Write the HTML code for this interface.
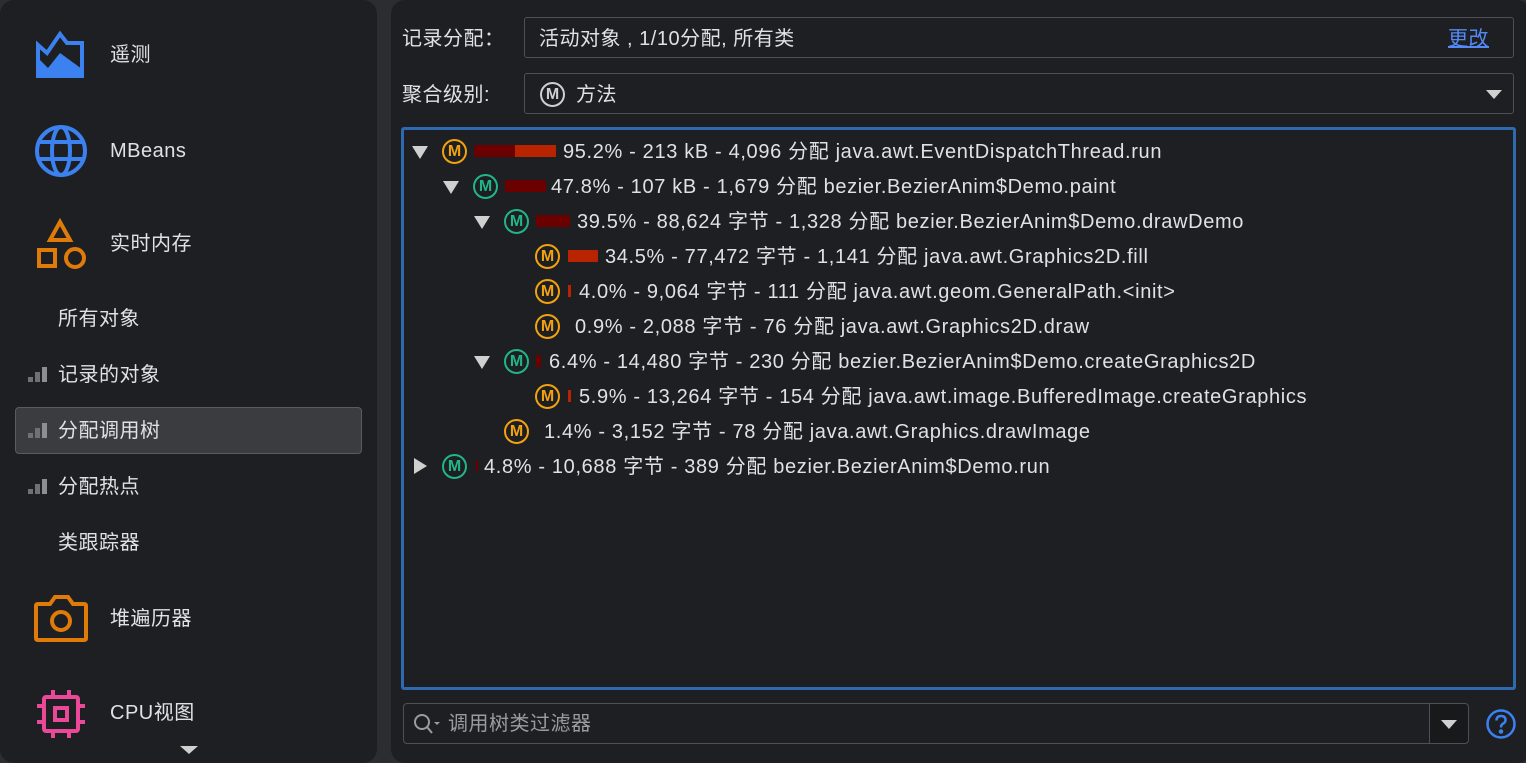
<!DOCTYPE html>
<html><head><meta charset="utf-8"><style>
*{margin:0;padding:0;box-sizing:border-box}
body{width:1526px;height:763px;background:#2b2d30;position:relative;overflow:hidden;font-family:"Liberation Sans","Noto Sans CJK SC",sans-serif;color:#dfe1e5;font-size:20px}
.a{position:absolute;white-space:nowrap}
#left{position:absolute;left:0;top:0;width:377px;height:763px;background:#1e1f22;border-radius:14px}
#right{position:absolute;left:391px;top:0;width:1140px;height:763px;background:#1e1f22;border-radius:14px}
.nav{font-size:20px;line-height:24px;letter-spacing:0.5px}
.m{position:absolute;width:25px;height:25px;border-radius:50%;border:2.5px solid #f2a20f;color:#f2a20f;font-size:16px;font-weight:bold;text-align:center;line-height:21px}
.g{border-color:#21b685;color:#21b685}
.tri{position:absolute;width:0;height:0;border-left:8px solid transparent;border-right:8px solid transparent;border-top:13px solid #d0d0d0}
.t{position:absolute;white-space:nowrap;font-size:20px;line-height:24px;letter-spacing:0.65px}
.bar{position:absolute;height:12px}
.sig{position:absolute;width:19px;height:15px}
</style></head><body>
<div id="left"></div>
<div id="right"></div>

<svg class="a" style="left:34px;top:30px" width="54" height="50" viewBox="0 0 54 50"><path d="M4 15 L13 23 L26 4 L33 13 L48 13 L48 46 L4 46 Z" fill="none" stroke="#3b82f0" stroke-width="4"/><path d="M4 46 L4 28 L14 38 L26 23 L48 39 L48 46 Z" fill="#3b82f0"/></svg>
<svg class="a" style="left:34px;top:124px" width="54" height="54" viewBox="0 0 54 54" fill="none" stroke="#3b82f0" stroke-width="4"><circle cx="27" cy="27" r="24"/><ellipse cx="27" cy="27" rx="9" ry="24"/><line x1="4" y1="18" x2="50" y2="18"/><line x1="4" y1="35" x2="50" y2="35"/></svg>
<svg class="a" style="left:36px;top:218px" width="52" height="52" viewBox="0 0 52 52" fill="none" stroke="#e07b0a" stroke-width="4"><path d="M24 4 L34 22 L14 22Z"/><rect x="3" y="32" width="16" height="16"/><circle cx="39" cy="40" r="9"/></svg>
<div class="a nav" style="left:110px;top:43px">遥测</div>
<div class="a nav" style="left:110px;top:139px">MBeans</div>
<div class="a nav" style="left:110px;top:232px">实时内存</div>
<div class="a nav" style="left:58px;top:307px">所有对象</div>
<div style="position:absolute;left:15px;top:407px;width:347px;height:47px;background:#3b3c40;border:1px solid #5a5b5e;border-radius:4px"></div>
<svg class="sig" style="left:28px;top:367px" viewBox="0 0 19 15"><rect x="0" y="10" width="5" height="5" fill="#6f7174"/><rect x="7" y="5" width="5" height="10" fill="#6f7174"/><rect x="14" y="0" width="5" height="15" fill="#8c8e91"/></svg>
<svg class="sig" style="left:28px;top:423px" viewBox="0 0 19 15"><rect x="0" y="10" width="5" height="5" fill="#6f7174"/><rect x="7" y="5" width="5" height="10" fill="#6f7174"/><rect x="14" y="0" width="5" height="15" fill="#8c8e91"/></svg>
<svg class="sig" style="left:28px;top:479px" viewBox="0 0 19 15"><rect x="0" y="10" width="5" height="5" fill="#6f7174"/><rect x="7" y="5" width="5" height="10" fill="#6f7174"/><rect x="14" y="0" width="5" height="15" fill="#8c8e91"/></svg>
<div class="a nav" style="left:58px;top:363px">记录的对象</div>
<div class="a nav" style="left:58px;top:419px">分配调用树</div>
<div class="a nav" style="left:58px;top:475px">分配热点</div>
<div class="a nav" style="left:58px;top:531px">类跟踪器</div>
<svg class="a" style="left:34px;top:594px" width="54" height="50" viewBox="0 0 54 50" fill="none" stroke="#e07b0a" stroke-width="4"><path d="M4 10 L16 10 L21 3 L34 3 L39 10 L50 10 Q52 10 52 12 L52 44 Q52 46 50 46 L4 46 Q2 46 2 44 L2 12 Q2 10 4 10Z"/><circle cx="27" cy="27" r="9"/></svg>
<div class="a nav" style="left:110px;top:607px">堆遍历器</div>
<svg class="a" style="left:36px;top:689px" width="50" height="50" viewBox="0 0 50 50" fill="none" stroke="#ec4899" stroke-width="4"><rect x="8" y="8" width="34" height="34" rx="2"/><rect x="19" y="19" width="12" height="12"/><path d="M17 1v7M33 1v7M17 42v7M33 42v7M1 17h7M1 33h7M42 17h7M42 33h7"/></svg>
<div class="a nav" style="left:110px;top:701px">CPU视图</div>
<div class="tri" style="left:180px;top:746px;border-top-width:8px;border-left-width:9px;border-right-width:9px"></div>

<div class="a nav" style="left:402px;top:27px">记录分配：</div>
<div style="position:absolute;left:524px;top:17px;width:990px;height:41px;border:1px solid #4e5054;border-radius:3px"></div>
<div class="a nav" style="left:539px;top:27px">活动对象 , 1/10分配, 所有类</div>
<div class="a nav" style="left:1448px;top:27px;color:#548af7;text-decoration:underline">更改</div>
<div class="a nav" style="left:402px;top:83px">聚合级别:</div>
<div style="position:absolute;left:524px;top:73px;width:990px;height:41px;border:1px solid #4e5054;border-radius:3px"></div>
<div class="m" style="left:540px;top:82px;border-color:#cfcfcf;color:#cfcfcf">M</div>
<div class="a nav" style="left:576px;top:83px">方法</div>
<div class="tri" style="left:1486px;top:90px;border-top-width:9px;border-left-width:8px;border-right-width:8px"></div>

<div style="position:absolute;left:401px;top:127px;width:1115px;height:563px;border:3px solid #2e6ab0;border-radius:3px"></div>

<div class="tri" style="left:412px;top:146px"></div><div class="m" style="left:442px;top:139px">M</div>
<div class="bar" style="left:474px;top:145px;width:41px;background:#6b0000"></div><div class="bar" style="left:515px;top:145px;width:41px;background:#b82400"></div>
<div class="t" style="left:563px;top:140px">95.2% - 213 kB - 4,096 分配 java.awt.EventDispatchThread.run</div>

<div class="tri" style="left:443px;top:181px"></div><div class="m g" style="left:473px;top:174px">M</div>
<div class="bar" style="left:505px;top:180px;width:41px;background:#6b0000"></div>
<div class="t" style="left:551px;top:175px">47.8% - 107 kB - 1,679 分配 bezier.BezierAnim$Demo.paint</div>

<div class="tri" style="left:474px;top:216px"></div><div class="m g" style="left:504px;top:209px">M</div>
<div class="bar" style="left:536px;top:215px;width:34px;background:#6b0000"></div>
<div class="t" style="left:577px;top:210px">39.5% - 88,624 字节 - 1,328 分配 bezier.BezierAnim$Demo.drawDemo</div>

<div class="m" style="left:535px;top:244px">M</div>
<div class="bar" style="left:568px;top:250px;width:30px;background:#b82400"></div>
<div class="t" style="left:605px;top:245px">34.5% - 77,472 字节 - 1,141 分配 java.awt.Graphics2D.fill</div>

<div class="m" style="left:535px;top:279px">M</div>
<div class="bar" style="left:568px;top:285px;width:3px;background:#b82400"></div>
<div class="t" style="left:579px;top:280px">4.0% - 9,064 字节 - 111 分配 java.awt.geom.GeneralPath.&lt;init&gt;</div>

<div class="m" style="left:535px;top:314px">M</div>
<div class="t" style="left:575px;top:315px">0.9% - 2,088 字节 - 76 分配 java.awt.Graphics2D.draw</div>

<div class="tri" style="left:474px;top:356px"></div><div class="m g" style="left:504px;top:349px">M</div>
<div class="bar" style="left:536px;top:355px;width:5px;background:#6b0000"></div>
<div class="t" style="left:549px;top:350px">6.4% - 14,480 字节 - 230 分配 bezier.BezierAnim$Demo.createGraphics2D</div>

<div class="m" style="left:535px;top:384px">M</div>
<div class="bar" style="left:568px;top:390px;width:3px;background:#b82400"></div>
<div class="t" style="left:579px;top:385px">5.9% - 13,264 字节 - 154 分配 java.awt.image.BufferedImage.createGraphics</div>

<div class="m" style="left:504px;top:419px">M</div>
<div class="t" style="left:544px;top:420px">1.4% - 3,152 字节 - 78 分配 java.awt.Graphics.drawImage</div>

<div style="position:absolute;left:414px;top:458px;width:0;height:0;border-top:8px solid transparent;border-bottom:8px solid transparent;border-left:13px solid #d0d0d0"></div>
<div class="m g" style="left:442px;top:454px">M</div>
<div class="bar" style="left:476px;top:460px;width:2px;background:#6b0000"></div>
<div class="t" style="left:484px;top:455px">4.8% - 10,688 字节 - 389 分配 bezier.BezierAnim$Demo.run</div>

<div style="position:absolute;left:403px;top:703px;width:1066px;height:41px;border:1px solid #4e5054;border-radius:4px"></div>
<div style="position:absolute;left:1429px;top:704px;width:39px;height:39px;background:#18191b;border-left:1px solid #4e5054;border-radius:0 4px 4px 0"></div>
<div class="tri" style="left:1441px;top:720px;border-top-width:9px;border-left-width:8px;border-right-width:8px"></div>
<svg class="a" style="left:413px;top:713px" width="30" height="22" viewBox="0 0 30 22" fill="none" stroke="#9a9ca0" stroke-width="2"><circle cx="9" cy="9" r="7"/><line x1="14" y1="14" x2="19" y2="20"/><path d="M21 9 l3 3 l3 -3z" fill="#9a9ca0" stroke="none"/></svg>
<div class="a nav" style="left:448px;top:712px;color:#9a9ca0">调用树类过滤器</div>
<svg class="a" style="left:1485px;top:708px" width="32" height="32" viewBox="0 0 32 32" fill="none" stroke="#3b82f0" stroke-width="2.5"><circle cx="16" cy="16" r="13.5"/><path d="M11.5 12.5 Q11.5 8 16 8 Q20.5 8 20.5 12 Q20.5 14.5 17.5 16 Q16 17 16 19.5"/><circle cx="16" cy="23.5" r="1" fill="#3b82f0"/></svg>
</body></html>
